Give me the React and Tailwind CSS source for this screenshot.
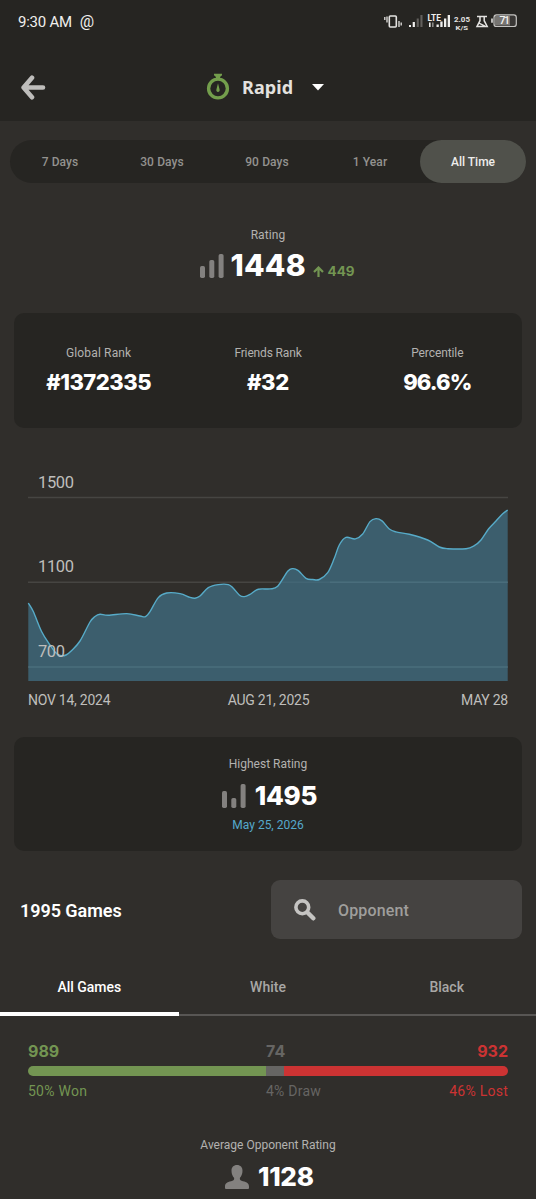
import React from "react";

const HISTORY = [
  [28.3, 603], [33.3, 611.5], [41.7, 631.7], [50, 645], [55.5, 652.5], [61, 655.7], [66, 655], [71.7, 650.5],
  [80, 641], [90, 622], [95, 616.5], [100, 614.3], [108.3, 615.3], [126.7, 613.6], [140, 616], [145.5, 616.6], [150, 611.7], [158.3, 597.6],
  [166.7, 593], [180, 593.6], [190, 597.4], [195, 598.2], [200, 596], [208.3, 587.6], [218.3, 584.6], [228.3, 584.6], [233.3, 588.3],
  [239.5, 595.2], [244.3, 596.6], [250, 594.3], [258.3, 589.2], [270, 588.9], [277.7, 586.3], [287.7, 571.3],
  [292.7, 568.6], [298.3, 570.6], [306, 578.3], [312.7, 579.5], [319.3, 579.5], [327.7, 572.7], [334.3, 558.3],
  [339.3, 545], [346, 537.4], [355.3, 538.9], [362.7, 534], [370, 521.6], [376, 518.6], [382, 520.9], [389.3, 529],
  [396, 531.9], [409.3, 534.3], [427.7, 540], [439.3, 547], [447.7, 548.7], [466, 548.7], [474.3, 545.7],
  [481, 540], [488.7, 528.8], [496, 521], [502.7, 513.8], [507.7, 510],
];

function smoothPath(pts) {
  let d = `M${pts[0][0]} ${pts[0][1]}`;
  for (let i = 0; i < pts.length - 1; i++) {
    const a = pts[Math.max(i - 1, 0)];
    const b = pts[i];
    const c = pts[i + 1];
    const e = pts[Math.min(i + 2, pts.length - 1)];
    d += `C${b[0] + (c[0] - a[0]) / 6} ${b[1] + (c[1] - a[1]) / 6} ${c[0] - (e[0] - b[0]) / 6} ${c[1] - (e[1] - b[1]) / 6} ${c[0]} ${c[1]}`;
  }
  return d;
}

function StatusIcons() {
  return (
    <svg className="block" width="136" height="20" viewBox="384 12 136 20" fill="none">
      <g stroke="#e4e3e1" strokeWidth="1.6">
        <rect x="389.3" y="16" width="7" height="11" rx="1" />
        <path d="M387 16.5v6M384.8 17v3M399 21v6M401.2 22.5v3" strokeWidth="1.3" />
      </g>
      <path d="M409 25h2v2h-2zM412.7 22h2.2v5h-2.2z" fill="#f0efed" />
      <path d="M416.7 18.5h2.1V27h-2.1zM420.4 15h2.1v12h-2.1z" fill="#62605d" />
      <text x="427.5" y="20.5" textLength="13.5" lengthAdjust="spacingAndGlyphs" fontFamily="Roboto, sans-serif" fontWeight="700" fontSize="8.5" fill="#f0efed">LTE</text>
      <path d="M429 22.5h1.6V27H429z" fill="#f0efed" />
      <path d="M432 22.5h1.6V27H432z" fill="#8b8986" />
      <path d="M436.5 24.5h2.3V27h-2.3zM440.3 21.5h2.3V27h-2.3zM444 18.5h2.3V27H444zM447.7 15h2.3v12h-2.3z" fill="#f0efed" />
      <text x="454" y="21.7" textLength="16" lengthAdjust="spacingAndGlyphs" fontFamily="Roboto, sans-serif" fontWeight="700" fontSize="7.5" fill="#e4e3e1">2.05</text>
      <text x="455.5" y="29.6" textLength="12.5" lengthAdjust="spacingAndGlyphs" fontFamily="Roboto, sans-serif" fontWeight="700" fontSize="6" fill="#e4e3e1">K/S</text>
      <path d="M477 16.6h10M480 17v3.7l-3 5.8h10.2l-3-5.8V17M479 23.2l6 3" stroke="#e4e3e1" strokeWidth="1.5" />
      <rect x="494" y="14.8" width="22.3" height="11.7" rx="2.6" fill="#393735" stroke="#c4c3c1" strokeWidth="1.2" />
      <path d="M495 16h15v9.5h-15z" fill="#777572" />
      <path d="M491.2 18.5h1.6v4.3h-1.6z" fill="#e4e3e1" />
      <text x="499.5" y="24.4" fontFamily="Roboto, sans-serif" fontWeight="500" fontSize="10.5" textLength="10.5" fill="#f4f3f1">71</text>
    </svg>
  );
}

function Bars({ heights }) {
  return (
    <svg className="block" width="24" height="24" viewBox="0 0 24 24" fill="#83817f">
      {heights.map((h, i) => (
        <rect key={i} x={i * 9.3} y={24 - h} width="5" height={h} rx="1.7" />
      ))}
    </svg>
  );
}

const NUM = "font-['Inter',sans-serif] font-extrabold text-white";
const LABEL = "text-[12px] leading-4 text-[#b3b2b0]";

function Stat({ label, value, spacing, labelSpacing }) {
  return (
    <div className="flex flex-col items-center">
      <div className={`${LABEL} ${labelSpacing}`}>{label}</div>
      <div className={`${NUM} mt-[9px] text-[22px] leading-6 ${spacing}`}>{value}</div>
    </div>
  );
}

function Header() {
  return (
    <header className="h-[121px] bg-[#262522]">
      <div className="flex h-11 items-center justify-between pl-[18px] pr-4">
        <div className="flex items-center gap-2 text-[#f0efed]">
          <span className="text-[15px] leading-5 tracking-[-0.25px]">9:30 AM</span>
          <span className="text-[16px] leading-5">@</span>
        </div>
        <StatusIcons />
      </div>
      <div className="flex h-[77px] items-center pb-px pl-[21px] pt-[9px]">
        <svg className="mt-px block" width="25" height="25" viewBox="0 0 25 25" fill="none" stroke="#bebdbb" strokeWidth="4.6" strokeLinecap="round" strokeLinejoin="round">
          <path d="M11 2.8 2.6 12.5 11 22.2M3 12.5h19" />
        </svg>
        <div className="ml-40 flex items-center">
          <svg className="block" width="24" height="27" viewBox="0 0 24 27">
            <circle cx="12" cy="15.5" r="9.4" fill="none" stroke="#739e4c" strokeWidth="3.4" />
            <path d="M8 .7h8v1.6L14 4v3h-4V4L8 2.3zM12 10.3l1.6 6.2c.3 1.8-.5 2.4-1.6 2.4s-1.9-.6-1.6-2.4z" fill="#739e4c" />
          </svg>
          <span className="ml-3 w-[52px] font-['Noto_Sans',sans-serif] text-[18px] font-bold leading-6 tracking-[0.1px] text-[#e2e1df]">Rapid</span>
          <svg className="ml-[18px] mt-px block" width="12" height="7" viewBox="0 0 12 7"><path d="M0 0h12L6 6.5z" fill="#fff" /></svg>
        </div>
      </div>
    </header>
  );
}

function Ranges() {
  return (
    <nav className="mx-2.5 mt-[19px] flex h-[43px] rounded-full bg-[#262522] text-[12px] font-medium tracking-[0.1px] text-[#93928f]">
      <div className="flex w-[100px] items-center justify-center">7 Days</div>
      <div className="flex w-[104px] items-center justify-center">30 Days</div>
      <div className="flex w-[106px] items-center justify-center">90 Days</div>
      <div className="flex w-[100px] items-center justify-center">1 Year</div>
      <div className="flex w-[106px] items-center justify-center rounded-full bg-[#50514b] tracking-normal text-[#eeedeb]">All Time</div>
    </nav>
  );
}

function Chart() {
  const line = smoothPath(HISTORY);
  return (
    <section className="mt-[41px] h-[268px]">
      <svg className="block" width="536" height="221" viewBox="0 469 536 221" fontFamily="Roboto, sans-serif" fontSize="16.5" fill="none">
        <path d="M28 497.5h480M28 582.3h480M28 667h480" stroke="#464542" strokeWidth="1.4" />
        <path d={`${line}L507.7 681H28.3Z`} fill="#42748a" fillOpacity=".7" />
        <path d="M28 667h480M330 582.3h178" stroke="#5a7d8c" strokeOpacity=".35" strokeWidth="1.4" />
        <path d={line} stroke="#57abc8" strokeWidth="1.4" />
        <g fill="#bfbebc">
          <text x="38" y="488.4" textLength="36">1500</text>
          <text x="38" y="572.4" textLength="36">1100</text>
          <text x="38" y="657.3" textLength="27">700</text>
        </g>
      </svg>
      <div className="mx-7 flex justify-between text-[14px] leading-5 tracking-[-0.25px] text-[#bfbebc]">
        <span className="w-[90px]">NOV 14, 2024</span>
        <span className="pl-px">AUG 21, 2025</span>
        <span className="w-[90px] text-right">MAY 28</span>
      </div>
    </section>
  );
}

export default function App() {
  return (
    <main className="h-[1199px] w-[536px] overflow-hidden bg-[#302e2b] font-['Roboto',sans-serif]">
      <Header />
      <Ranges />
      <section className="mt-[44px] h-[86px]">
        <div className={`${LABEL} text-center tracking-[0.1px]`}>Rating</div>
        <div className="mt-[7px] flex h-7 pl-[199.5px]">
          <div className="pt-[4px]"><Bars heights={[12, 18, 24]} /></div>
          <span className={`${NUM} ml-[7px] w-[76px] text-[30px] leading-[31px] tracking-[0.2px]`}>1448</span>
          <svg className="ml-[6px] mt-[16px] block" width="11" height="11" viewBox="0 0 11 11" fill="none" stroke="#739552" strokeWidth="2.2">
            <path d="M5.5 11V2M1 6l4.5-4.5L10 6" />
          </svg>
          <span className="ml-1 mt-[11px] font-['Inter',sans-serif] text-[13.5px] font-bold leading-5 text-[#739552]">449</span>
        </div>
      </section>
      <section className="mx-3.5 grid h-[115px] grid-cols-3 rounded-[10px] bg-[#262522] pt-[32px]">
        <Stat label="Global Rank" value="#1372335" spacing="tracking-[-0.5px]" labelSpacing="tracking-[0.15px]" />
        <Stat label="Friends Rank" value="#32" spacing="tracking-[-0.3px]" labelSpacing="tracking-[-0.15px]" />
        <Stat label="Percentile" value="96.6%" spacing="tracking-[-0.9px]" labelSpacing="tracking-[-0.1px]" />
      </section>
      <Chart />
      <section className="mx-3.5 flex h-[114px] flex-col items-center rounded-[10px] bg-[#262522] pt-[19px]">
        <div className={LABEL}>Highest Rating</div>
        <div className="mt-2 flex h-[30px] items-center gap-[9px] pl-[3px]">
          <div className="pt-px"><Bars heights={[17, 10, 24]} /></div>
          <span className={`${NUM} pt-px text-[26px] leading-[30px] tracking-[-0.2px]`}>1495</span>
        </div>
        <div className="mt-[7px] text-[12px] leading-4 text-[#55a9cc]">May 25, 2026</div>
      </section>
      <section className="mt-[29px] flex h-[59px] items-center justify-between pl-5 pr-3.5">
        <h2 className="pt-px text-[18px] font-semibold tracking-[-0.05px] text-white">1995 Games</h2>
        <div className="flex h-full w-[251px] items-center rounded-[9px] bg-[#454341] pl-[23px]">
          <svg className="block" width="22" height="22" viewBox="0 0 22 22" fill="none" stroke="#c5c4c2">
            <circle cx="8.3" cy="8.3" r="6.4" strokeWidth="3.6" />
            <path d="m13.5 13.5 5.8 5.8" strokeWidth="4.4" strokeLinecap="round" />
          </svg>
          <span className="ml-[22px] pt-[3px] text-[16px] font-medium tracking-[0.15px] text-[#9f9e9c]">Opponent</span>
        </div>
      </section>
      <nav className="mt-[20px] grid h-[57px] grid-cols-3 text-center text-[14px] font-medium text-[#a8a7a5]">
        <div className="border-b-4 border-white pt-[18px] leading-5 text-white">All Games</div>
        <div className="border-b-2 border-[#585654] pt-[18px] leading-5">White</div>
        <div className="border-b-2 border-[#585654] pt-[18px] leading-5">Black</div>
      </nav>
      <section className="mx-7 mt-[25px] h-[96px]">
        <div className="flex font-['Inter',sans-serif] text-[16px] font-bold leading-5">
          <span className="w-[238px] text-[#739552]">989</span>
          <span className="text-[#666563]">74</span>
          <span className="ml-auto text-[#cc3333]">932</span>
        </div>
        <div className="mt-[5px] flex h-2.5 overflow-hidden rounded-full">
          <div className="w-[238px] bg-[#739552]" />
          <div className="w-[18px] bg-[#666563]" />
          <div className="flex-1 bg-[#cc3333]" />
        </div>
        <div className="mt-[5px] flex text-[14px] leading-5 tracking-[0.25px]">
          <span className="w-[238px] text-[#739552]">50% Won</span>
          <span className="text-[#666563]">4% Draw</span>
          <span className="ml-auto text-[#cc3333]">46% Lost</span>
        </div>
      </section>
      <section className="text-center">
        <div className={LABEL}>Average Opponent Rating</div>
        <div className="mt-2 flex h-[30px] items-center pl-[225px]">
          <svg className="mt-0.5 block" width="24" height="24" viewBox="0 0 24 24" fill="#83817f">
            <path d="M12 0C8.5 0 6.5 2.3 6.5 5.7c0 3.2 1.1 5.2 2.5 7.1.5 1.3 0 2.4-1.5 3C3.6 17 0 17.6 0 21.5V23q0 1 1 1h22q1 0 1-1v-1.5c0-3.9-3.6-4.5-7.5-5.7-1.5-.6-2-1.7-1.5-3 1.4-1.9 2.5-3.9 2.5-7.1C17.5 2.3 15.5 0 12 0z" />
          </svg>
          <span className={`${NUM} ml-[9px] pt-px text-[26px] leading-[30px] tracking-[-0.3px]`}>1128</span>
        </div>
      </section>
    </main>
  );
}
